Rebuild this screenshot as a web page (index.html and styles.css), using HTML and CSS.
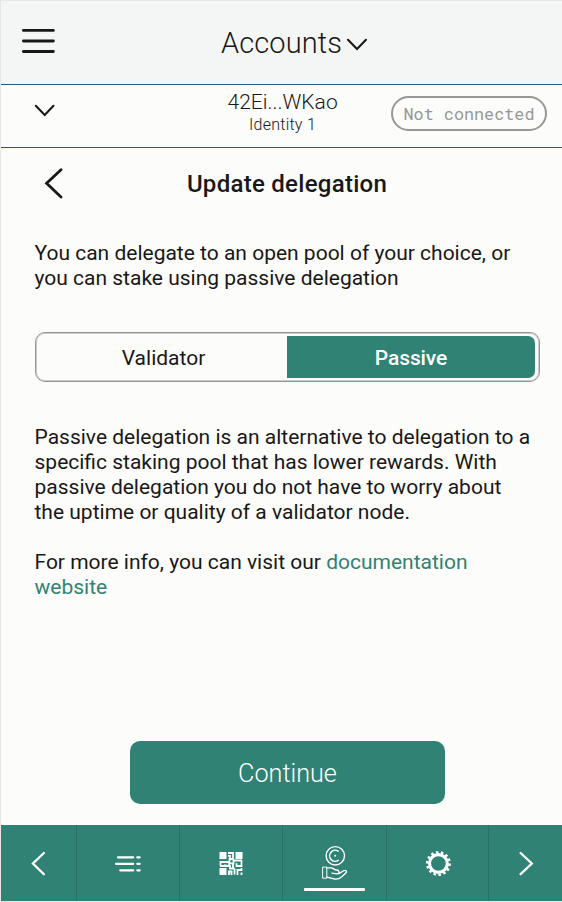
FILE: index.html
```html
<!DOCTYPE html>
<html lang="en">
<head>
<meta charset="utf-8">
<title>Update delegation</title>
<link rel="stylesheet" href="styles.css">
</head>
<body>
<div class="app">
  <header class="topbar">
    <svg class="menu" width="34" height="26" viewBox="0 0 34 26"><path d="M2.4 2.4H32.4M2.4 13H32.4M2.4 23.5H32.4"/></svg>
    <h1 class="title"><span class="title-text">Accounts</span><svg width="22" height="14" viewBox="0 0 22 14"><path d="M2 1.8L11 11L20 1.8"/></svg></h1>
  </header>
  <section class="account">
    <svg class="expand" width="22" height="14" viewBox="0 0 22 14"><path d="M1.8 1.8L10.7 11L19.5 1.8"/></svg>
    <div class="who"><div class="address">42Ei...WKao</div><div class="identity">Identity 1</div></div>
    <div class="status"><span>Not connected</span></div>
  </section>
  <main class="content">
    <div class="heading">
      <svg class="back" width="20" height="32" viewBox="0 0 20 32"><path d="M18 1.7L3.6 15.3L18 29"/></svg>
      <h2>Update delegation</h2>
    </div>
    <p class="intro">You can delegate to an open pool of your choice, or<br>you can stake using passive delegation</p>
    <div class="toggle"><div class="option">Validator</div><div class="option selected">Passive</div></div>
    <p class="info">Passive delegation is an alternative to delegation to a<br>specific staking pool that has lower rewards. With<br>passive delegation you do not have to worry about<br>the uptime or quality of a validator node.</p>
    <p class="more">For more info, you can visit our <a>documentation<br>website</a></p>
    <button class="continue">Continue</button>
  </main>
  <nav class="tabs">
    <div class="tab"><svg width="16" height="26" viewBox="0 0 16 26"><path class="arrow" d="M12.9 3L1.9 13.5L12.9 24.2"/></svg></div>
    <div class="tab"><svg width="28" height="20" viewBox="0 0 28 20"><path class="lines" d="M4 4.3H19.2M2 10.8H19.2M6.2 17.3H19.2M23.3 4.3H25.7M23.3 10.8H25.7M23.3 17.3H25.7"/></svg></div>
    <div class="tab"><svg width="24" height="24" viewBox="0 0 24 24"><path class="solid" d="M.5 1h7v7h-7zM16.5 1h7v7h-7zM.5 17h7v7h-7z"/><path class="maze" d="M9 2H14V8H10.5V11H1.5V15M5 14.5H7.5M10 15V12.3H14.5V9.5H23M22.5 9.5V15H17.5V12.3M1 15H11V17.5H15.5M14 12.5V17.5M9 4.8H11V7M10 24V20.5H12.5V24M15.5 17.5V23.5M17.5 19H22.5V17M18.5 19V24M22.5 21.5V24"/></svg></div>
    <div class="tab active"><svg width="28" height="36" viewBox="0 0 28 36"><g class="earn"><circle cx="14.3" cy="10.8" r="9.2"/><path class="coin" d="M17.2 6.2A5.5 5.5 0 1 0 17.2 15.4"/><circle class="solid" cx="14.2" cy="10.8" r="1"/><path class="cuff" d="M2 22.1H5.8V33.2H2z"/><path d="M6 22.8H10C12.5 22.8 13 25 15.5 25C18.5 25 19 28.8 16 28.8L11 28.2M18 28.6L22.5 25.8C24.8 24.8 26.6 26.3 24.8 28L20.5 32Q17.5 34.5 13.5 34L6 32.2"/></g></svg></div>
    <div class="tab"><svg class="gear" width="26" height="26" viewBox="0 0 26 26"><circle cx="13.4" cy="13.5" r="8.9"/><circle class="teeth" cx="13.4" cy="13.5" r="11.2" pathLength="28"/></svg></div>
    <div class="tab"><svg width="16" height="26" viewBox="0 0 16 26"><path class="arrow" d="M2.6 3L13.8 13.5L2.6 24.2"/></svg></div>
  </nav>
</div>
</body>
</html>
```
FILE: styles.css
```css
* { box-sizing: border-box; }
body { margin: 0; background: #fcfcfa; color: #181818; font-family: Roboto, sans-serif; }
h1, h2, p { margin: 0; }
svg { display: block; flex: none; fill: none; stroke: #181818; stroke-width: 2.1; stroke-linecap: round; }
.app { width: 562px; height: 902px; border: 1px solid #e5e6e6; border-right: 0; display: flex; flex-direction: column; }
.topbar { height: 84px; background: #f4f6f5; border-bottom: 1px solid #2c5b7c; display: grid; grid-template-columns: 1fr auto 1fr; align-items: center; padding: 0 20px; }
.menu { stroke-width: 2.8; margin-top: -3px; }
.title { display: flex; align-items: center; gap: 4px; font-size: 29px; font-weight: 300; letter-spacing: .1px; margin-left: 26px; }
.title svg { margin-top: 4px; }
.account { height: 63px; border-bottom: 1px solid #2c5b7c; display: grid; grid-template-columns: 1fr 110px 1fr; padding: 4px 15px 0 33px; }
.expand { margin-top: 15px; }
.who { text-align: center; font-weight: 300; margin: 0 8px 0 -8px; white-space: nowrap; }
.address { font-size: 21px; line-height: 26px; }
.identity { font-size: 16px; line-height: 19px; letter-spacing: .25px; }
.status { justify-self: end; width: 156px; height: 35px; margin-top: 7px; border: 2px solid #979797; border-radius: 18px; color: #979797; font-family: "Roboto Mono", "Liberation Mono", monospace; font-size: 16.8px; display: flex; align-items: center; justify-content: center; }
.content { flex: 1; padding: 0 22px 0 34px; font-size: 21px; line-height: 25px; display: flex; flex-direction: column; }
.heading { display: grid; grid-template-columns: 30px 1fr 30px; height: 72px; align-items: center; padding: 0 9px 0 8px; }
.heading h2 { font-size: 24px; font-weight: 500; text-align: center; letter-spacing: .28px; }
.back { stroke-width: 2.8; }
.intro { margin: 21px 0 0 -.5px; }
.toggle { margin-top: 41px; height: 50px; border: 1px solid #979797; box-shadow: inset 0 0 0 1px #c9c9c8; border-radius: 10px; padding: 3px 4px; display: grid; grid-template-columns: 247px 1fr; }
.option { display: flex; align-items: center; justify-content: center; padding-top: 2px; }
.selected { background: #308274; color: #fff; border-radius: 0 7px 7px 0; font-weight: 500; letter-spacing: -.1px; }
.info { margin: 43px 0 0 -.5px; }
.more { margin: 25px 0 0 -.5px; }
a { color: #308274; }
.continue { margin: auto auto 21px 95px; padding: 1px 0 0; width: 315px; height: 63px; border: 0; border-radius: 10px; background: #308274; color: #fff; font: 300 25.2px Roboto, sans-serif; }
.tabs { height: 76px; background: #308274; display: grid; grid-template-columns: 75px 103px 103px 104px 102px 74px; }
.tab { display: flex; align-items: center; justify-content: center; border-left: 1px solid #287166; position: relative; }
.tab:first-child { border-left: 0; }
.tab svg { stroke: #fff; }
.tab .arrow { stroke-width: 2.3; }
.lines { stroke-width: 2.2; }
.tab .solid { fill: #fff; stroke: none; }
.maze { stroke-width: 1.8; stroke-linecap: butt; }
.earn { stroke-width: 1.35; }
.coin { stroke-width: 1.5; }
.cuff { stroke-width: 1; }
.tab .gear { stroke-width: 3.1; stroke-linecap: butt; }
.teeth { stroke-width: 2.6; stroke-dasharray: 1 1; }
.active::after { content: ""; position: absolute; left: 21px; bottom: 10px; width: 61px; height: 3px; border-radius: 1px; background: #fff; }
```
